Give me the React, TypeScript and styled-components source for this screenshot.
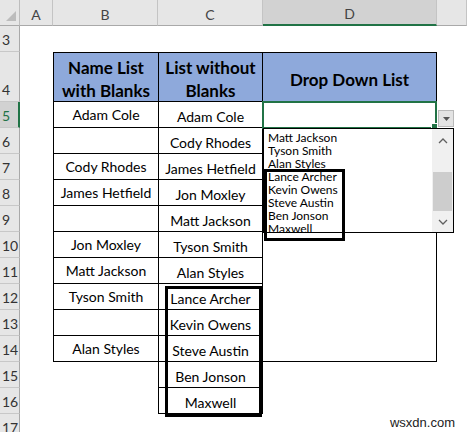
import React from "react";
import styled, { createGlobalStyle } from "styled-components";

const Global = createGlobalStyle`
  html, body { margin: 0; padding: 0; background: #fff; overflow: hidden; }
  #root { width: 467px; height: 432px; }
`;

const FONT = `Lato, "Open Sans", sans-serif`;
const GREEN = "#217346";

const Sheet = styled.div`
  position: relative;
  display: grid;
  grid-template-columns: 20px 33px 105px 105px 174px 30px;
  grid-template-rows: 26px 26px 50px repeat(12, 26px) 26px;
  width: 467px;
  height: 432px;
  overflow: hidden;
  font-family: ${FONT};
  background: #fff;
`;

const Corner = styled.div`
  box-sizing: border-box;
  background: #e6e6e6;
  border-right: 1px solid #bdbdbd;
  border-bottom: 1px solid #a9a9a9;
  display: flex;
  align-items: flex-end;
  justify-content: flex-end;
  padding: 0 3px 4px 0;
`;

const ColHead = styled.div<{ $sel?: boolean }>`
  box-sizing: border-box;
  background: ${(p) => (p.$sel ? "#d2d2d2" : "#e6e6e6")};
  border-right: 1px solid #c4c4c4;
  border-bottom: ${(p) => (p.$sel ? `2px solid ${GREEN}` : "1px solid #a9a9a9")};
  display: flex;
  align-items: center;
  justify-content: center;
  padding-top: 3px;
  font-size: 14px;
  color: #444;
`;

const RowHead = styled.div<{ $sel?: boolean }>`
  box-sizing: border-box;
  background: ${(p) => (p.$sel ? "#d2d2d2" : "#e6e6e6")};
  border-bottom: 1px solid #c8c8c8;
  border-right: ${(p) => (p.$sel ? `2px solid ${GREEN}` : "1px solid #a9a9a9")};
  display: flex;
  align-items: flex-end;
  padding: 0 0 3px 2px;
  font-size: 14px;
  line-height: 16px;
  color: ${(p) => (p.$sel ? GREEN : "#333")};
`;

type CellProps = {
  $t?: boolean;
  $r?: boolean;
  $b?: boolean;
  $l?: boolean;
  $fill?: boolean;
  $bottom?: boolean;
  $head?: boolean;
};

const line = "1px solid #000";

const Cell = styled.div<CellProps>`
  position: relative;
  box-sizing: border-box;
  display: flex;
  justify-content: center;
  align-items: ${(p) => (p.$bottom ? "flex-end" : "center")};
  padding-bottom: ${(p) => (p.$bottom ? "1px" : "0")};
  padding-top: ${(p) => (p.$head ? "4px" : "0")};
  text-align: center;
  white-space: nowrap;
  font-size: ${(p) => (p.$head ? "17px" : "14px")};
  font-weight: ${(p) => (p.$head ? 700 : 400)};
  line-height: ${(p) => (p.$head ? "23px" : "18px")};
  color: #000;
  background: ${(p) => (p.$fill ? "#8ea9db" : "transparent")};
  border-top: ${(p) => (p.$t ? line : "0")};
  border-right: ${(p) => (p.$r ? line : "0")};
  border-bottom: ${(p) => (p.$b ? line : "0")};
  border-left: ${(p) => (p.$l ? line : "0")};
`;

const ActiveCell = styled(Cell)`
  z-index: 5;
`;

const Selection = styled.div`
  position: absolute;
  left: -1px;
  top: -1px;
  right: -1px;
  bottom: -1px;
  border: 2px solid ${GREEN};
  pointer-events: none;
`;

const Handle = styled.div`
  position: absolute;
  right: -3px;
  bottom: -3px;
  width: 5px;
  height: 5px;
  background: ${GREEN};
  border: 1px solid #fff;
`;

const ArrowBtn = styled.div`
  position: absolute;
  left: 175px;
  top: 8px;
  width: 16px;
  height: 17px;
  box-sizing: border-box;
  background: #e3e3e3;
  border: 1px solid #b9b9b9;
  display: flex;
  align-items: center;
  justify-content: center;
`;

const Popup = styled.div`
  position: absolute;
  left: 0;
  top: 26px;
  width: 191px;
  height: 105px;
  box-sizing: border-box;
  background: #fff;
  border: 1px solid #000;
  display: flex;
`;

const List = styled.div`
  flex: 1;
  display: flex;
  flex-direction: column;
  padding: 2px 0 0 4px;
  text-align: left;
`;

const Item = styled.div`
  font-size: 12px;
  line-height: 13px;
  height: 13px;
  color: #000;
`;

const Scroll = styled.div`
  width: 21px;
  background: #f0f0f0;
  display: flex;
  flex-direction: column;
`;

const ScrollBtn = styled.div<{ $h: number }>`
  height: ${(p) => p.$h}px;
  display: flex;
  align-items: center;
  justify-content: center;
`;

const Track = styled.div<{ $h: number }>`
  height: ${(p) => p.$h}px;
`;

const Thumb = styled.div`
  height: 39px;
  margin: 0 1px;
  background: #cdcdcd;
`;

const Mark = styled.div<{ $l: number; $t: number; $w: number; $h: number }>`
  position: absolute;
  left: ${(p) => p.$l}px;
  top: ${(p) => p.$t}px;
  width: ${(p) => p.$w}px;
  height: ${(p) => p.$h}px;
  box-sizing: border-box;
  border: 3px solid #000;
  z-index: 6;
  pointer-events: none;
`;

const Watermark = styled.div`
  position: absolute;
  right: 12px;
  bottom: 2px;
  font-family: "Liberation Sans", Arial, sans-serif;
  font-size: 13px;
  color: #222;
  z-index: 10;
`;

const Chevron = ({ up }: { up?: boolean }) => (
  <svg width="10" height="6" viewBox="0 0 10 6">
    <polyline
      points={up ? "1,5 5,1 9,5" : "1,1 5,5 9,1"}
      fill="none"
      stroke="#606060"
      strokeWidth="1.3"
    />
  </svg>
);

const B = ["Adam Cole", "", "Cody Rhodes", "James Hetfield", "", "Jon Moxley", "Matt Jackson", "Tyson Smith", "", "Alan Styles", null, null];
const C = ["Adam Cole", "Cody Rhodes", "James Hetfield", "Jon Moxley", "Matt Jackson", "Tyson Smith", "Alan Styles", "Lance Archer", "Kevin Owens", "Steve Austin", "Ben Jonson", "Maxwell"];
const DROP = ["Matt Jackson", "Tyson Smith", "Alan Styles", "Lance Archer", "Kevin Owens", "Steve Austin", "Ben Jonson", "Maxwell"];

export default function App() {
  const rows = [];
  for (let i = 0; i < 12; i++) {
    const r = i + 5;
    const b = B[i];
    rows.push(
      <React.Fragment key={r}>
        <RowHead $sel={r === 5}>{r}</RowHead>
        <Cell />
        {b === null ? <Cell /> : <Cell $l $b>{b}</Cell>}
        <Cell $l $r $b $bottom>
          {C[i]}
          {r === 12 && <Mark $l={6} $t={2} $w={97} $h={131} />}
        </Cell>
        {r === 5 ? (
          <ActiveCell $r>
            <Selection>
              <Handle />
            </Selection>
            <ArrowBtn>
              <svg width="7" height="4" viewBox="0 0 7 4">
                <polygon points="0,0 7,0 3.5,4" fill="#555" />
              </svg>
            </ArrowBtn>
            <Popup>
              <List>
                {DROP.map((d) => (
                  <Item key={d}>{d}</Item>
                ))}
              </List>
              <Scroll>
                <ScrollBtn $h={24}>
                  <Chevron up />
                </ScrollBtn>
                <Track $h={19} />
                <Thumb />
                <ScrollBtn $h={21}>
                  <Chevron />
                </ScrollBtn>
              </Scroll>
              <Mark $l={0} $t={40} $w={81} $h={72} />
            </Popup>
          </ActiveCell>
        ) : r <= 14 ? (
          <Cell $r $b={r === 14} />
        ) : (
          <Cell />
        )}
        <Cell />
      </React.Fragment>
    );
  }

  return (
    <>
      <Global />
      <Sheet>
        <Corner>
          <svg width="10" height="10" viewBox="0 0 10 10">
            <polygon points="10,0 10,10 0,10" fill="#bcbcbc" />
          </svg>
        </Corner>
        <ColHead>A</ColHead>
        <ColHead>B</ColHead>
        <ColHead>C</ColHead>
        <ColHead $sel>D</ColHead>
        <ColHead />

        <RowHead>3</RowHead>
        <Cell />
        <Cell />
        <Cell />
        <Cell />
        <Cell />

        <RowHead>4</RowHead>
        <Cell />
        <Cell $head $fill $t $l $b>
          Name List
          <br />
          with Blanks
        </Cell>
        <Cell $head $fill $t $l $r $b>
          List without
          <br />
          Blanks
        </Cell>
        <Cell $head $fill $t $r $b>
          Drop Down List
        </Cell>
        <Cell />

        {rows}

        <RowHead>17</RowHead>
        <Cell />
        <Cell />
        <Cell />
        <Cell />
        <Cell />
        <Watermark>wsxdn.com</Watermark>
      </Sheet>
    </>
  );
}
